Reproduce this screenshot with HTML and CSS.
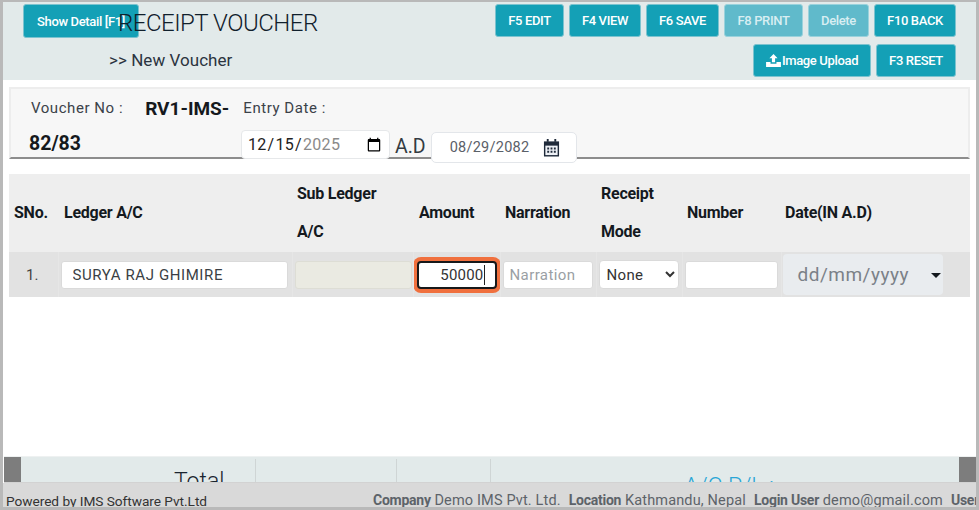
FILE: index.html
```html
<!DOCTYPE html>
<html lang="en">
<head>
<meta charset="utf-8">
<title>Receipt Voucher</title>
<link rel="stylesheet" href="styles.css">
</head>
<body>
<div class="frame">
  <header class="topbar">
    <button class="btn show-detail">Show Detail [F1]</button>
    <div class="heading">
      <h1 class="title">RECEIPT VOUCHER</h1>
      <div class="crumb">&gt;&gt; New Voucher</div>
    </div>
    <div class="actions">
      <div class="action-row">
        <button class="btn w69">F5 EDIT</button>
        <button class="btn w72">F4 VIEW</button>
        <button class="btn w73">F6 SAVE</button>
        <button class="btn w79 off">F8 PRINT</button>
        <button class="btn w61 off">Delete</button>
        <button class="btn w82">F10 BACK</button>
      </div>
      <div class="action-row">
        <button class="btn w118">
          <svg class="upload" viewBox="0 0 16 14" width="15" height="13"><path d="M8 0 3.6 4.6h2.7V9h3.4V4.6h2.7z M0 8.6h4.8v1.9h6.4V8.6H16V14H0z" fill="#fff"/></svg>Image Upload</button>
        <button class="btn w80">F3 RESET</button>
      </div>
    </div>
  </header>

  <section class="voucher">
    <div class="voucher-top">
      <span class="lbl no-lbl">Voucher No :</span>
      <strong class="no-val">RV1-IMS-</strong>
      <span class="lbl">Entry Date :</span>
    </div>
    <div class="voucher-bottom">
      <strong class="no-rest">82/83</strong>
      <input class="date-native" type="date" value="2025-12-15">
      <span class="ad">A.D</span>
      <div class="date-bs">
        <span>08/29/2082</span>
        <svg viewBox="0 0 18 19" width="17" height="18"><path d="M4 0h2v3H4z M12 0h2v3h-2z" fill="#1f2a3a"/><path d="M1 2.5h16v16H1z" fill="#1f2a3a"/><path d="M2.5 7h13v10h-13z" fill="#eef1f6"/><path d="M4.5 9h2v2h-2z M8 9h2v2H8z M11.5 9h2v2h-2z M4.5 12.5h2v2h-2z M8 12.5h2v2H8z M11.5 12.5h2v2h-2z" fill="#1f2a3a"/></svg>
      </div>
    </div>
  </section>

  <table class="grid">
    <colgroup>
      <col class="c1"><col class="c2"><col class="c3"><col class="c4"><col class="c5"><col class="c6"><col class="c7"><col class="c8">
    </colgroup>
    <thead>
      <tr>
        <th>SNo.</th>
        <th class="th-shift">Ledger A/C</th>
        <th>Sub Ledger<br>A/C</th>
        <th class="th-shift">Amount</th>
        <th>Narration</th>
        <th>Receipt Mode</th>
        <th>Number</th>
        <th class="th-back">Date(IN A.D)</th>
      </tr>
    </thead>
    <tbody>
      <tr>
        <td class="sno">1.</td>
        <td><input class="field ledger" type="text" value="SURYA RAJ GHIMIRE"></td>
        <td><input class="field sub" type="text" disabled></td>
        <td><div class="amount"><span class="typed">50000</span></div></td>
        <td><input class="field narr" type="text" placeholder="Narration"></td>
        <td><select class="mode"><option>None</option></select></td>
        <td><input class="field num" type="text"></td>
        <td><div class="date-ad"><span>dd/mm/yyyy</span><i class="caret"></i></div></td>
      </tr>
    </tbody>
  </table>

  <div class="spacer"></div>

  <div class="totals">
    <div class="thumb"></div>
    <div class="t-cell t1">Total</div>
    <div class="t-cell t2"></div>
    <div class="t-cell t3"></div>
    <div class="t-cell t4">A/C P/L :</div>
    <div class="thumb"></div>
  </div>

  <footer class="status">
    <span class="powered">Powered by IMS Software Pvt.Ltd</span>
    <span class="meta"><b>Company</b> Demo IMS Pvt. Ltd.</span>
    <span class="meta"><b>Location</b> Kathmandu, Nepal</span>
    <span class="meta"><b>Login User</b> demo@gmail.com</span>
    <span class="meta"><b>User</b></span>
  </footer>
</div>
</body>
</html>
```

FILE: styles.css
```css
* { box-sizing: border-box; }
html, body { margin: 0; height: 100%; background: #fff; }
body { font-family: Roboto, "Liberation Sans", sans-serif; color: #212529; overflow: hidden; }

.frame {
  width: 979px; height: 510px;
  border: solid #b9b9b9;
  border-width: 2px 3px 3px 3px;
  display: flex; flex-direction: column;
  position: relative; overflow: hidden;
  background: #fff;
}

/* header */
.topbar {
  height: 78px; flex: none;
  background: #e2eaea;
  display: flex; justify-content: space-between;
  position: relative;
}
.btn {
  height: 33px; border: 1px solid #7cc3cf; border-radius: 3px;
  background: #14a0b6; color: #fff;
  font: 500 13px Roboto, sans-serif;
  padding: 0; letter-spacing: -0.35px;
  white-space: nowrap;
  display: inline-flex; align-items: center; justify-content: center;
}
.btn.off { background: #60bacb; border-color: #9ad2dc; color: #d8eef2; }
.show-detail {
  position: absolute; left: 20px; top: 2px;
  width: 116px; height: 34px;
  justify-content: flex-start; padding-left: 13px; overflow: hidden;
}
.heading { margin-left: 106px; position: relative; }
.title {
  margin: 6px 0 0 9px; font-size: 24px; font-weight: 300; line-height: 30px;
  color: #10202c; letter-spacing: -0.5px; white-space: nowrap;
}
.crumb { margin-top: 12px; font-size: 17px; line-height: 20px; color: #2b3440; letter-spacing: .05px; }
.actions {
  display: flex; flex-direction: column; align-items: flex-end; gap: 7px;
  margin: 2px 20px 0 0;
}
.action-row { display: flex; gap: 5px; }
.w69 { width: 69px; } .w72 { width: 72px; } .w73 { width: 73px; }
.w79 { width: 79px; } .w61 { width: 61px; } .w82 { width: 82px; }
.w118 { width: 118px; } .w80 { width: 80px; }
.upload { margin-right: 1px; }

/* voucher panel */
.voucher {
  margin: 7px 6px 0 6px; height: 72px; flex: none;
  background: #f7f7f7;
  border: 2px solid #ededed; border-bottom: 2px solid #8d8d8d;
  display: flex; flex-direction: column;
}
.voucher-top { display: flex; align-items: center; height: 37px; padding-top: 3px; }
.lbl { font-size: 15px; color: #3b4249; letter-spacing: .55px; }
.no-lbl { margin-left: 20px; }
.no-val { margin: 0 14px 0 22px; font-size: 19px; font-weight: 700; color: #15191d; }
.voucher-bottom { display: flex; align-items: flex-start; height: 33px; position: relative; }
.no-rest { margin: 8px 0 0 18px; font-size: 19.5px; font-weight: 700; color: #15191d; width: 212px; }
.date-native {
  width: 149px; height: 29px; margin-top: 6px;
  border: 1px solid #e6e8ea; border-radius: 4px; background: #fff;
  font: 400 16px Roboto, sans-serif; letter-spacing: .3px; color: #222;
  padding: 0 5px 0 5px;
}
.date-native::-webkit-datetime-edit-year-field { color: #8a8a8a; }
.ad { margin: 11px 5px 0 5px; font-size: 19.5px; color: #333b42; }
.date-bs {
  width: 146px; height: 31px; margin-top: 8px;
  background: #fff; border: 1px solid #e3e6ea; border-radius: 5px;
  display: flex; align-items: center; justify-content: space-between;
  padding: 0 16px 0 18px;
  font-size: 14.5px; color: #5a6068; letter-spacing: .25px;
  position: relative; z-index: 1;
}

/* table */
.grid {
  margin: 15px 6px 0 6px; width: 961px; flex: none;
  border-collapse: collapse; table-layout: fixed;
}
.c1 { width: 49px; } .c2 { width: 234px; } .c3 { width: 121px; } .c4 { width: 87px; }
.c5 { width: 96px; } .c6 { width: 86px; } .c7 { width: 99px; } .c8 { width: 189px; }
.grid thead tr { height: 78px; background: #eeeeee; }
.grid th {
  text-align: left; vertical-align: middle;
  font-size: 16px; font-weight: 700; line-height: 38.5px;
  color: #14191e; padding: 0 4px 0 5px; letter-spacing: -.25px;
}
.grid th.th-shift { padding-left: 6px; }
.grid th.th-back { padding-left: 4px; }
.grid tbody tr { height: 45px; background: #e2e2e2; }
.grid td { padding: 0 4px; vertical-align: middle; border-left: 1px solid #e6e6e6; }
.grid td:first-child { border-left: 0; }
.sno { text-align: center; font-size: 15px; color: #444; padding-right: 6px !important; }
.field {
  display: block; height: 28px; border: 1px solid #dadada; border-radius: 3px;
  background: #fff; font: 400 15px Roboto, sans-serif; color: #3a3f45;
  letter-spacing: .4px; outline: 0;
}
.ledger { width: 227px; padding: 0 11px; margin-left: -2px; letter-spacing: .6px; }
.sub { width: 117px; margin-left: -2px; background: #eaeae2; border-color: #ddddd5; }
.narr { width: 90px; margin-left: -2px; padding: 0 6px; }
.narr::placeholder { color: #9a9fa4; opacity: 1; }
.num { width: 93px; margin-left: -2px; }
.amount {
  width: 80px; height: 28px; margin-left: -1px;
  border: 2px solid #16181a; border-radius: 4px; background: #fff;
  box-shadow: 0 0 0 4px #f0703e;
  font-size: 15px; color: #333; letter-spacing: .2px; padding-right: 10px;
  display: flex; align-items: center; justify-content: flex-end;
}
.typed { border-right: 1px solid #222; line-height: 20px; }
.mode {
  width: 80px; height: 29px; margin-left: -2px;
  border: 1px solid #dadada; border-radius: 4px; background: #fff;
  font: 400 15px Roboto, sans-serif; letter-spacing: .35px; color: #333;
  padding-left: 3px;
}
.date-ad {
  width: 160px; height: 41px; margin-left: -3px; border-radius: 4px; background: #e9ecef;
  display: flex; align-items: center; justify-content: space-between;
  padding: 0 2px 0 15px;
  font-size: 19px; color: #7b8188; letter-spacing: .5px;
}
.caret { width: 0; height: 0; border: 5px solid transparent; border-top-color: #14191e; border-bottom: 0; margin-top: 2px; }

.spacer { flex: 1; }

/* totals strip */
.totals {
  height: 27px; flex: none; margin: 0 0 0 1px; width: 972px;
  background: #e2eaea; display: flex; overflow: hidden;
  border-top: 1px solid #eef1f1; border-bottom: 1px solid #d2d2d2;
}
.thumb { width: 17px; height: 27px; background: #7d7d7d; flex: none; }
.t-cell { height: 26px; margin-top: 2px; border-right: 1px solid #cfd5d5; font-size: 23px; font-weight: 300; overflow: visible; color: #1a2530; }
.t1 { width: 235px; padding: 8px 0 0 153px; line-height: 30px; }
.t2 { width: 141px; }
.t3 { width: 94px; }
.t4 { flex: 1; border-right: 0; padding: 13px 0 0 193px; line-height: 30px; color: #2aa6d6; }

/* status bar */
.status {
  height: 24px; flex: none; background: #d9d9d9;
  display: flex; align-items: flex-start; white-space: nowrap; overflow: hidden;
  font-size: 14.5px; color: #5d6369; line-height: 18px; padding-top: 8px;
}
.powered { margin: 1px 166px 0 3px; color: #333; font-size: 13.7px; letter-spacing: -.05px; }
.meta { margin-right: 8px; letter-spacing: .15px; }
.meta b { font-weight: 700; font-size: 14px; letter-spacing: -.25px; }
```
